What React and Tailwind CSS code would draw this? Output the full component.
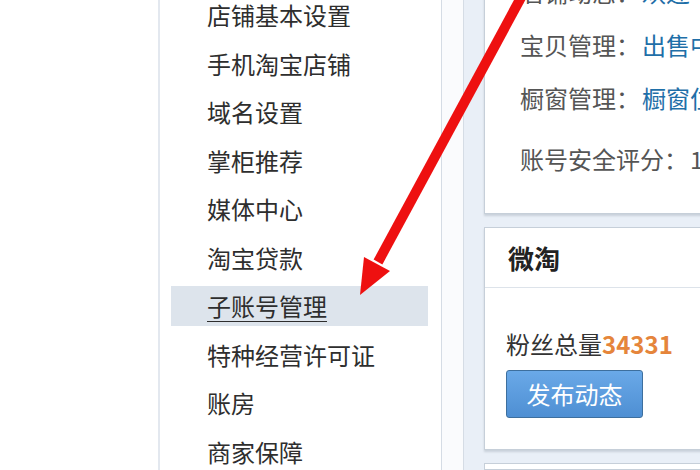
import React from 'react';

const menu = [
  '店铺基本设置',
  '手机淘宝店铺',
  '域名设置',
  '掌柜推荐',
  '媒体中心',
  '淘宝贷款',
  '子账号管理',
  '特种经营许可证',
  '账房',
  '商家保障',
];

const font = { fontFamily: '"Noto Sans CJK SC", "Noto Sans", sans-serif' };

export default function App() {
  return (
    <div style={font} className="relative flex h-[470px] w-[700px] overflow-hidden bg-white text-[24px] text-[#2e2e2e]">
      <div className="w-[160px] shrink-0 border-r-2 border-[#e3e8ef]" />

      <nav className="-mt-[9px] w-[281px] shrink-0">
        {menu.map((item) => {
          const active = item === '子账号管理';
          return (
            <div key={item} className="flex h-[48.5px] items-center">
              <div className={`ml-[11px] mr-[13px] flex h-[40px] flex-1 items-center pl-[36px] leading-none ${active ? 'bg-[#dde4ec] underline underline-offset-[5px] decoration-1' : ''}`}>
                {item}
              </div>
            </div>
          );
        })}
      </nav>

      <div className="w-[22px] shrink-0 border-l border-[#d5dce5] bg-[#fafbfd]" />

      <main className="flex w-[260px] shrink-0 flex-col gap-[13px] border-l border-[#d5dce5] bg-[#e9eff7] pl-[20px]">
        <section className="-mt-[36px] w-[260px] border border-[#c6cfd9] bg-white pb-[28px] pl-[35px] text-[#555] shadow-[0_2px_2px_#c9d1da]">
          <div className="flex h-[53px] items-center whitespace-nowrap">
            店铺动态：<span className="ml-[2px] text-[#1f6fa8]">欢迎</span>
          </div>
          <div className="flex h-[53px] items-center whitespace-nowrap">
            宝贝管理：<span className="ml-[2px] text-[#1f6fa8]">出售中</span>
          </div>
          <div className="flex h-[53px] items-center whitespace-nowrap">
            橱窗管理：<span className="ml-[2px] text-[#1f6fa8]">橱窗位</span>
          </div>
          <div className="mt-[8px] flex h-[53px] items-center whitespace-nowrap">
            账号安全评分：<span className="ml-[2px]">1</span>
          </div>
        </section>

        <section className="w-[260px] border border-[#c6cfd9] bg-white shadow-[0_2px_2px_#c9d1da]">
          <div className="flex h-[60px] items-center border-b border-[#dde3ea] pl-[23px] text-[26px] font-bold text-[#222]">
            微淘
          </div>
          <div className="h-[161px] pl-[21px] pt-[41px]">
            <div className="flex h-[30px] items-center whitespace-nowrap text-[#333]">
              粉丝总量<span className="font-bold text-[#e5853b]">34331</span>
            </div>
            <button
              type="button"
              className="mt-[11px] flex h-[48px] w-[137px] items-center justify-center rounded-[3px] border border-[#3d6f9e] bg-gradient-to-b from-[#6aa9e8] to-[#4e8fd3] text-[24px] text-white"
            >
              发布动态
            </button>
          </div>
        </section>

        <section className="h-[60px] w-[260px] border border-[#c6cfd9] bg-white" />
      </main>

      <svg className="pointer-events-none absolute left-0 top-0" width="700" height="470" viewBox="0 0 700 470">
        <line x1="524" y1="-8" x2="378" y2="262" stroke="#ee1010" strokeWidth="10" />
        <polygon points="360,295 364,257 390,271" fill="#ee1010" />
      </svg>
    </div>
  );
}
